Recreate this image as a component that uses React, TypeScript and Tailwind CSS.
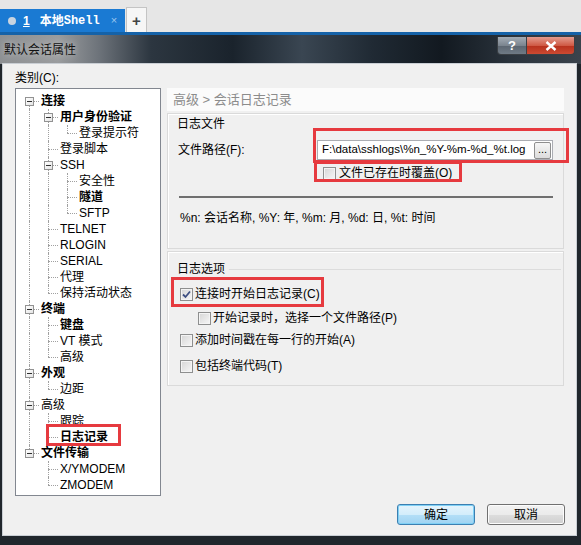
import React from 'react';

type TreeNode = { label: string; level: number; bold?: boolean; exp?: boolean };

const TREE: TreeNode[] = [
  { label: '连接', level: 0, bold: true, exp: true },
  { label: '用户身份验证', level: 1, bold: true, exp: true },
  { label: '登录提示符', level: 2 },
  { label: '登录脚本', level: 1 },
  { label: 'SSH', level: 1, exp: true },
  { label: '安全性', level: 2 },
  { label: '隧道', level: 2, bold: true },
  { label: 'SFTP', level: 2 },
  { label: 'TELNET', level: 1 },
  { label: 'RLOGIN', level: 1 },
  { label: 'SERIAL', level: 1 },
  { label: '代理', level: 1 },
  { label: '保持活动状态', level: 1 },
  { label: '终端', level: 0, bold: true, exp: true },
  { label: '键盘', level: 1, bold: true },
  { label: 'VT 模式', level: 1 },
  { label: '高级', level: 1 },
  { label: '外观', level: 0, bold: true, exp: true },
  { label: '边距', level: 1 },
  { label: '高级', level: 0, exp: true },
  { label: '跟踪', level: 1 },
  { label: '日志记录', level: 1, bold: true },
  { label: '文件传输', level: 0, bold: true, exp: true },
  { label: 'X/YMODEM', level: 1 },
  { label: 'ZMODEM', level: 1 },
];

// true when another node at the same level follows before the parent ends
const hasNext = (i: number) => {
  const lv = TREE[i].level;
  for (let j = i + 1; j < TREE.length; j++) {
    if (TREE[j].level < lv) return false;
    if (TREE[j].level === lv) return true;
  }
  return false;
};

const ancestorContinues = (i: number, k: number) => {
  for (let j = i - 1; j >= 0; j--) {
    if (TREE[j].level === k) return hasNext(j);
  }
  return false;
};

const dots = 'absolute border-dotted border-[#a0a0a0]';

const TreeRow: React.FC<{ node: TreeNode; index: number }> = ({ node, index }) => (
  <div className="flex h-[16px] items-center pl-[4px]">
    {Array.from({ length: node.level + 1 }).map((_, k) => (
      <div key={k} className="relative h-[16px] w-[19px] shrink-0">
        {k < node.level && ancestorContinues(index, k) && (
          <div className={`${dots} left-[9px] top-0 h-[16px] border-l`} />
        )}
        {k === node.level && (
          <>
            {index > 0 && <div className={`${dots} left-[9px] top-0 h-[8px] border-l`} />}
            {hasNext(index) && <div className={`${dots} left-[9px] top-[8px] h-[8px] border-l`} />}
            <div className={`${dots} left-[9px] top-[8px] w-[10px] border-t`} />
            {node.exp && (
              <div className="absolute left-[5px] top-[4px] flex h-[9px] w-[9px] items-center justify-center border border-[#929292] bg-[linear-gradient(135deg,#ffffff,#e4e4e4)]">
                <div className="h-px w-[5px] bg-[#2f2f2f]" />
              </div>
            )}
          </>
        )}
      </div>
    ))}
    <span className={`ml-[2px] whitespace-nowrap leading-[16px] text-black ${node.bold ? 'font-bold' : ''}`}>
      {node.label}
    </span>
  </div>
);

const CheckBox: React.FC<{ checked?: boolean }> = ({ checked }) => (
  <div className="flex h-[13px] w-[13px] shrink-0 items-center justify-center border border-[#8e8f8f] bg-[linear-gradient(135deg,#d6d6d6,#f7f7f7)] shadow-[inset_0_0_0_1px_#f4f4f4]">
    {checked && (
      <svg width="9" height="9" viewBox="0 0 9 9">
        <path d="M1 4.5 L3.5 7 L8 1.5" fill="none" stroke="#3e4f82" strokeWidth="1.8" />
      </svg>
    )}
  </div>
);

const RedBox: React.FC<{ className: string }> = ({ className }) => (
  <div className={`pointer-events-none absolute border-[3px] border-[#e63a3f] ${className}`} />
);

const App: React.FC = () => {
  return (
    <div className="flex h-[545px] w-[581px] flex-col overflow-hidden bg-[#e6e6e6] font-['Liberation_Sans','Noto_Sans_CJK_SC',sans-serif] text-[12px]">
      {/* session tabs */}
      <div className="flex h-[32px] items-end">
        <div className="flex h-[23px] w-[125px] items-center bg-[#1a7ad3] pl-[8px] text-white">
          <div className="h-[8px] w-[8px] rounded-full bg-[#c8d4e0]" />
          <span className="ml-[7px] font-bold underline">1</span>
          <span className="ml-[10px] font-bold">本地</span>
          <span className="font-['Liberation_Mono',monospace] font-bold">Shell</span>
          <span className="ml-[11px] text-[11px] text-[#9cc6ee]">×</span>
        </div>
        <div className="ml-[1px] flex h-[25px] w-[21px] items-center justify-center border border-b-0 border-[#c4c4c4] bg-[#f6f6f6] text-[15px] font-bold leading-none text-[#444]">
          +
        </div>
      </div>
      <div className="h-[3px] bg-[#1562a8]" />

      {/* dialog window */}
      <div className="flex flex-1 flex-col bg-[#20262c]">
        <div className="flex h-[29px] items-start bg-[linear-gradient(90deg,#8d9093_0%,#9a9c9e_10%,#6d737a_17%,#2c3640_26%,#1a232c_40%,#3a4652_52%,#202a34_64%,#121920_76%,#2a333c_88%,#3a434c_100%)]">
          <span className="ml-[4px] mt-[7px] leading-[16px] text-[#111] [text-shadow:0_0_6px_#d0d0d0]">默认会话属性</span>
          <div className="ml-auto mr-[6px] mt-[2px] flex h-[18px] overflow-hidden rounded-b-[4px] border border-t-0 border-[#3a3f44]">
            <div className="flex w-[29px] items-center justify-center border-r border-[#3a3f44] bg-[linear-gradient(180deg,#a3acb5,#7b858f_50%,#5b6570_51%,#6f7a85)] text-[13px] font-bold text-white">
              ?
            </div>
            <div className="flex w-[47px] items-center justify-center bg-[linear-gradient(180deg,#e49b8e,#cf5a45_50%,#b6301c_51%,#cc4a32)]">
              <svg width="12" height="10" viewBox="0 0 12 10">
                <path d="M1.5 1 L10.5 9 M10.5 1 L1.5 9" stroke="#ffffff" strokeWidth="2.4" />
              </svg>
            </div>
          </div>
        </div>

        <div className="flex flex-1 pl-[3px] pr-[8px] pb-[10px]">
          <div className="relative flex flex-1 flex-col bg-[#f0f0f0] shadow-[0_0_0_1px_#c9ced4]">
            <div className="flex gap-[6px] px-[12px] pt-[6px]">
              {/* category tree */}
              <div className="flex w-[146px] flex-col">
                <div className="h-[18px] leading-[16px]">类别(C):</div>
                <div className="h-[408px] border border-[#828790] bg-white pt-[4px]">
                  {TREE.map((node, i) => (
                    <TreeRow key={i} node={node} index={i} />
                  ))}
                </div>
              </div>

              {/* settings page */}
              <div className="flex w-[397px] flex-col pt-[18px]">
                <div className="flex h-[23px] items-center bg-[#fbfbfb] pl-[6px] text-[13px] text-[#8c8c8c]">
                  高级 &gt; 会话日志记录
                </div>

                <div className="mt-[2px] flex h-[136px] flex-col border border-[#dadada] px-[10px] pt-[2px] shadow-[inset_1px_1px_0_#ffffff]">
                  <div className="-ml-px h-[16px] leading-[16px]">日志文件</div>
                  <div className="mt-[8px] flex h-[20px] items-center">
                    <span className="w-[139px] shrink-0">文件路径(F):</span>
                    <div className="flex h-[20px] flex-1 items-center border border-[#abadb3] bg-white pl-[4px] pr-[1px]">
                      <span className="flex-1 whitespace-nowrap text-[11.5px]">F:\data\sshlogs\%n_%Y-%m-%d_%t.log</span>
                      <div className="flex h-[17px] w-[17px] items-end justify-center rounded-[2px] border border-[#8f8f8f] bg-[linear-gradient(180deg,#f6f6f6,#dcdcdc)] pb-[3px] text-[11px] leading-none">
                        ...
                      </div>
                    </div>
                  </div>
                  <div className="ml-[145px] mt-[6px] flex h-[14px] items-center gap-[3px]">
                    <CheckBox />
                    <span className="leading-[14px]">文件已存在时覆盖(O)</span>
                  </div>
                  <div className="ml-px mt-[16px] h-[2px] bg-[#6f6f6f]" />
                  <div className="ml-[2px] mt-[12px] h-[16px] whitespace-nowrap leading-[16px]">
                    %n: 会话名称, %Y: 年, %m: 月, %d: 日, %t: 时间
                  </div>
                </div>

                <div className="mt-[2px] flex h-[135px] flex-col border border-[#dadada] pl-[12px] pr-[2px] pt-[9px] shadow-[inset_1px_1px_0_#ffffff]">
                  <div className="-ml-[3px] flex h-[16px] items-center">
                    <span className="leading-[16px]">日志选项</span>
                    <div className="ml-[4px] mt-[1px] h-px flex-1 bg-[#dcdcdc]" />
                  </div>
                  <div className="mt-[9px] flex h-[16px] items-center gap-[2px]">
                    <CheckBox checked />
                    <span className="leading-[16px]">连接时开始日志记录(C)</span>
                  </div>
                  <div className="ml-[18px] mt-[8px] flex h-[16px] items-center gap-[2px]">
                    <CheckBox />
                    <span className="leading-[16px]">开始记录时，选择一个文件路径(P)</span>
                  </div>
                  <div className="mt-[6px] flex h-[16px] items-center gap-[2px]">
                    <CheckBox />
                    <span className="leading-[16px]">添加时间戳在每一行的开始(A)</span>
                  </div>
                  <div className="mt-[10px] flex h-[16px] items-center gap-[2px]">
                    <CheckBox />
                    <span className="leading-[16px]">包括终端代码(T)</span>
                  </div>
                </div>
              </div>
            </div>

            {/* dialog buttons */}
            <div className="mt-[8px] flex justify-end gap-[12px] pr-[11px]">
              <button className="flex h-[21px] w-[78px] items-center justify-center rounded-[3px] border border-[#3c7fb1] bg-[linear-gradient(180deg,#e5f4fc_0%,#d3edfb_50%,#b4dff7_51%,#9fd3f2_100%)] shadow-[inset_0_0_0_1px_#7fd0f5]">
                确定
              </button>
              <button className="flex h-[21px] w-[78px] items-center justify-center rounded-[3px] border border-[#707070] bg-[linear-gradient(180deg,#f2f2f2_0%,#ebebeb_50%,#dddddd_51%,#cfcfcf_100%)] shadow-[inset_0_0_0_1px_#fcfcfc]">
                取消
              </button>
            </div>

            {/* red annotation frames */}
            <RedBox className="left-[43px] top-[360px] h-[22px] w-[75px]" />
            <RedBox className="left-[310px] top-[64px] h-[35px] w-[256px]" />
            <RedBox className="left-[311px] top-[97px] h-[21px] w-[148px]" />
            <RedBox className="left-[168px] top-[213px] h-[30px] w-[153px]" />
          </div>
        </div>
      </div>
    </div>
  );
};

export default App;
